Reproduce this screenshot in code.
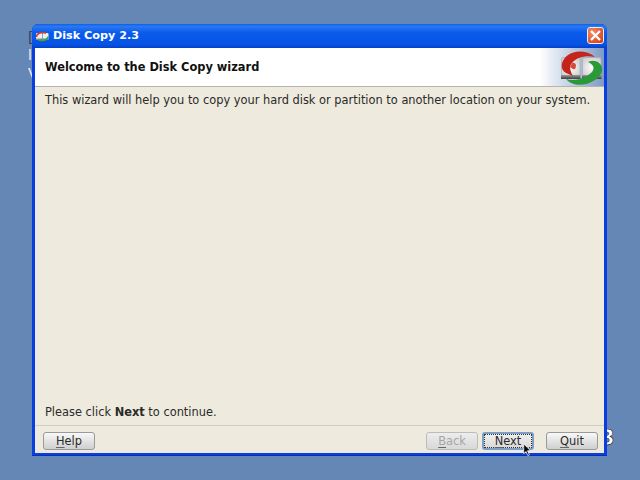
<script>
</script>

<div class="desktop">
  <div class="behind-col">
    <span class="dark">[</span>
    <span>l</span>
    <span>V</span>
  </div>
  <span class="behind-three">3</span>
  <div class="window">
    <div class="titlebar">
      <svg class="appicon" width="16" height="16" viewBox="0 0 16 16">
        <rect x="2" y="5" width="6" height="6.5" rx="1" fill="#f2f0ea"/>
        <rect x="8.5" y="5" width="6" height="6.5" rx="1" fill="#f2f0ea"/>
        <rect x="2" y="10.5" width="12.5" height="1.5" fill="#8a8a86"/>
        <path d="M2.5 9C2.5 5.5 7 3.6 12 5.2" fill="none" stroke="#d63a2c" stroke-width="1.5"/>
        <path d="M14 8.5C14 11.5 9 13.6 4.5 12" fill="none" stroke="#34a548" stroke-width="1.5"/>
      </svg>
      <span class="title">Disk Copy 2.3</span>
      <button class="close" aria-label="Close">
        <svg width="15" height="15" viewBox="0 0 15 15"><path d="M3.8 3.8l7.4 7.4M11.2 3.8l-7.4 7.4" stroke="#fff" stroke-width="2.3" stroke-linecap="square"/></svg>
      </button>
    </div>
    <div class="client">
      <div class="header">
        <span class="heading">Welcome to the Disk Copy wizard</span>
        <svg class="logo" width="44" height="38" viewBox="0 0 44 38">
          <defs>
            <radialGradient id="platter" cx="0.5" cy="0.55" r="0.7">
              <stop offset="0" stop-color="#fdfdfd"/>
              <stop offset="1" stop-color="#c9c9c9"/>
            </radialGradient>
            <linearGradient id="base" x1="0" y1="0" x2="0" y2="1">
              <stop offset="0" stop-color="#9a9a9a"/>
              <stop offset="1" stop-color="#3e3e3e"/>
            </linearGradient>
          </defs>
          <rect x="1.5" y="9.5" width="18.5" height="18" rx="1.5" fill="url(#platter)" stroke="#a8a8a8" stroke-width="0.6"/>
          <rect x="22.5" y="9.5" width="18.5" height="18" rx="1.5" fill="url(#platter)" stroke="#a8a8a8" stroke-width="0.6"/>
          <rect x="1" y="27" width="19.5" height="4" fill="url(#base)"/>
          <rect x="22" y="27" width="19.5" height="4" fill="url(#base)"/>
          <path d="M35 9C27 2 15 2 8 7C0 13 0 22 6 25L13 28C10 23 9 18 12 15C16 10 25 7 35 9Z" fill="#c4241c"/>
          <path d="M12 15C16 14 17 18 15 21C13 22 12 20 10 19Z" fill="#d8483c"/>
          <path d="M28 14C34 11 41 14 42 20C43 28 35 33 27 36C18 38 10 36 6 31C12 33 20 32 25 29C31 26 35 22 33 18C32 16 30 15 28 14Z" fill="#2a9a38"/>
        </svg>
      </div>
      <div class="content">
        <p>This wizard will help you to copy your hard disk or partition to another location on your system.</p>
        <p>Please click <b>Next</b> to continue.</p>
      </div>
      <div class="footer">
        <button class="btn"><u>H</u>elp</button>
        <div class="right-buttons">
          <button class="btn" disabled><u>B</u>ack</button>
          <button class="btn focus"><span class="focus-ring"><u>N</u>ext</span></button>
          <button class="btn quit"><u>Q</u>uit</button>
        </div>
      </div>
    </div>
  </div>
  <svg class="cursor" width="9" height="14" viewBox="0 0 12 18">
    <path d="M1 1v13l3-3 2.5 5.5 2-1L6 10h4z" fill="#000" stroke="#fff" stroke-width="1"/>
  </svg>
</div>

<style>
  :global(body) { margin: 0; }
  .desktop {
    position: relative;
    width: 640px;
    height: 480px;
    background: #6487b6;
    overflow: hidden;
    padding: 24px 0 0 32px;
    box-sizing: border-box;
    font-family: "DejaVu Sans", sans-serif;
    font-size: 11.4px;
    color: #2a2a2a;
  }
  .behind-col {
    position: absolute;
    left: 28px;
    top: 28px;
    display: flex;
    flex-direction: column;
    font-size: 14px;
    line-height: 18px;
    color: #eef1f6;
  }
  .behind-col .dark { color: #3a4250; }
  .behind-three {
    position: absolute;
    left: 600px;
    top: 426px;
    font-size: 21px;
    line-height: 24px;
    font-weight: bold;
    color: #fff;
    -webkit-text-stroke: 0.6px #111;
  }
  .window {
    position: relative;
    width: 575px;
    height: 432px;
    box-sizing: border-box;
    border-radius: 6px 6px 0 0;
    background: #0a3ee0;
    box-shadow: inset 0 -1px 0 #0430b8;
    display: flex;
    flex-direction: column;
  }
  .titlebar {
    height: 24px;
    display: flex;
    align-items: center;
    padding: 0 3px 1px 2px;
    box-sizing: border-box;
    gap: 3px;
    background: linear-gradient(#0f5fe8 0%, #2a78f2 10%, #0b5cec 35%, #0653e4 85%, #0440c8 100%);
    border-radius: 6px 6px 0 0;
    flex: none;
  }
  .appicon { flex: none; }
  .title {
    font-weight: bold;
    font-size: 11.2px;
    color: #fff;
    flex: 1;
  }
  .close {
    width: 17px;
    height: 17px;
    padding: 0;
    margin: 0;
    border: 1px solid #eeeeee;
    border-radius: 3px;
    background: radial-gradient(circle at 30% 30%, #f0906c, #de4f26 70%, #c63e18);
    display: flex;
    align-items: center;
    justify-content: center;
  }
  .client {
    flex: 1;
    margin: 0 3px 3px 3px;
    background: #eeeade;
    display: flex;
    flex-direction: column;
    min-height: 0;
  }
  .header {
    height: 38px;
    background: linear-gradient(90deg, #fff 0, #fff 505px, #7e9ac6 100%);
    border-bottom: 1px solid #b5b3ad;
    display: flex;
    align-items: center;
    justify-content: space-between;
    padding: 0 0 0 10px;
    flex: none;
  }
  .heading { font-weight: bold; color: #111; }
  .content {
    flex: 1;
    display: flex;
    flex-direction: column;
    justify-content: space-between;
    padding: 6px 10px 6px;
    min-height: 0;
    border-bottom: 1px solid #d0cec6;
  }
  .content p { margin: 0; line-height: 14px; }
  .footer {
    flex: none;
    height: 27px;
    box-sizing: border-box;
    display: flex;
    align-items: flex-start;
    justify-content: space-between;
    padding: 6px 6px 0 8px;
  }
  .right-buttons { display: flex; gap: 4px; }
  .btn {
    font: inherit;
    color: #2a2a2a;
    width: 52px;
    height: 18px;
    padding: 0;
    border: 1px solid #9a9a9a;
    border-radius: 3px;
    background: linear-gradient(#f8f8f8, #dfdfdf 60%, #cfcfcf);
    box-sizing: border-box;
  }
  .btn u { text-decoration-color: #666; text-underline-offset: 2px; }
  .btn.quit { margin-left: 8px; }
  .btn:disabled { color: #a6a6a6; border-color: #bcbcbc; background: linear-gradient(#ededed, #d8d8d8); }
  .btn.focus { border: 2px solid #7d9fc4; background: linear-gradient(#f0f0f0, #d8d8d8); }
  .focus-ring {
    display: block;
    border: 1px dotted #333;
    height: 12px;
    line-height: 12px;
  }
  .cursor { position: absolute; left: 523px; top: 443px; }
</style>
